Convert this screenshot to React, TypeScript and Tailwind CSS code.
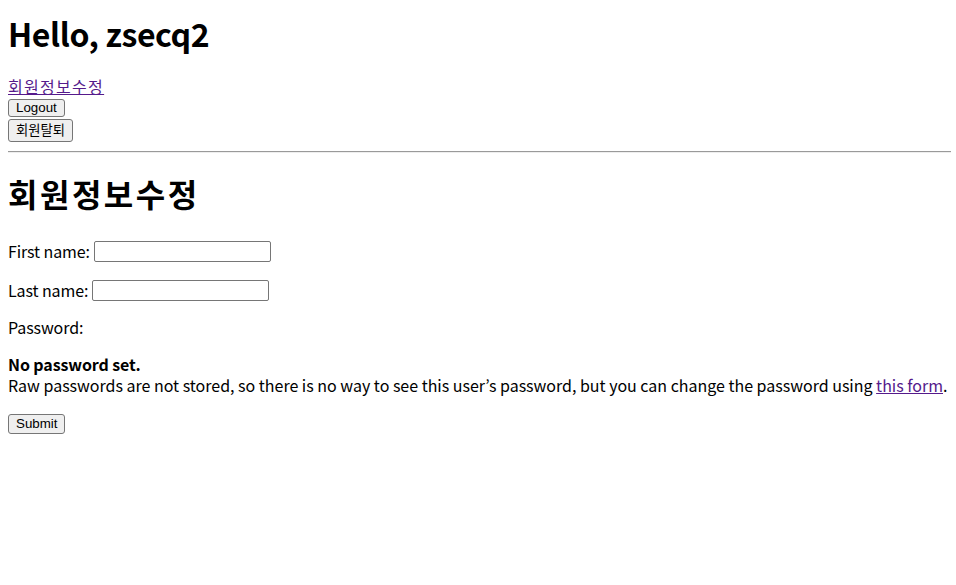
export default function App() {
  const btn =
    "block bg-[#efefef] border border-[#767676] rounded-[3px] px-[7px] text-[13.33px] tracking-normal text-black font-['Liberation_Sans','Noto_Sans_CJK_KR',sans-serif] leading-none";

  return (
    <div className="min-h-[585px] bg-white px-2 text-base tracking-[-0.1px] text-black font-['Noto_Sans_CJK_KR','Noto_Sans',sans-serif]">
      <h1 className="pt-[12px] text-[32px] font-bold leading-[43px] tracking-[-0.4px]">Hello, zsecq2</h1>

      <a href="#" className="mt-[21px] block w-fit leading-[21px] tracking-[1.3px] text-[#551a8b] underline">
        회원정보수정
      </a>
      <button className={`${btn} mt-[2px] h-[18px]`}>Logout</button>
      <button className={`${btn} mt-[2px] h-[23px] tracking-[1.3px]`}>회원탈퇴</button>

      <hr className="mt-[9px] -mr-[3px] border-t border-b border-t-[#9a9a9a] border-b-[#eeeeee]" />

      <h1 className="mt-[19px] text-[32px] font-bold leading-[43px] tracking-[2.5px]">회원정보수정</h1>

      <form className="mt-[26px]">
        <p className="flex items-center gap-[4px] leading-[21px]">
          <label>First name:</label>
          <input className="h-[21px] w-[177px] rounded-[2px] border border-[#767676] bg-white" />
        </p>
        <p className="mt-[18px] flex items-center gap-[4px] leading-[21px]">
          <label>Last name:</label>
          <input className="h-[21px] w-[177px] rounded-[2px] border border-[#767676] bg-white" />
        </p>
        <p className="mt-[16px] leading-[21px]">Password:</p>
        <div className="mt-[16px] leading-[21px]">
          <strong className="block">No password set.</strong>
          <span className="block whitespace-nowrap tracking-[-0.01px]">
            Raw passwords are not stored, so there is no way to see this user’s password, but you can change the
            password using{" "}
            <a href="#" className="text-[#551a8b] underline">
              this form
            </a>
            .
          </span>
        </div>
        <button className={`${btn} mt-[18px] h-[20px]`}>Submit</button>
      </form>
    </div>
  );
}
